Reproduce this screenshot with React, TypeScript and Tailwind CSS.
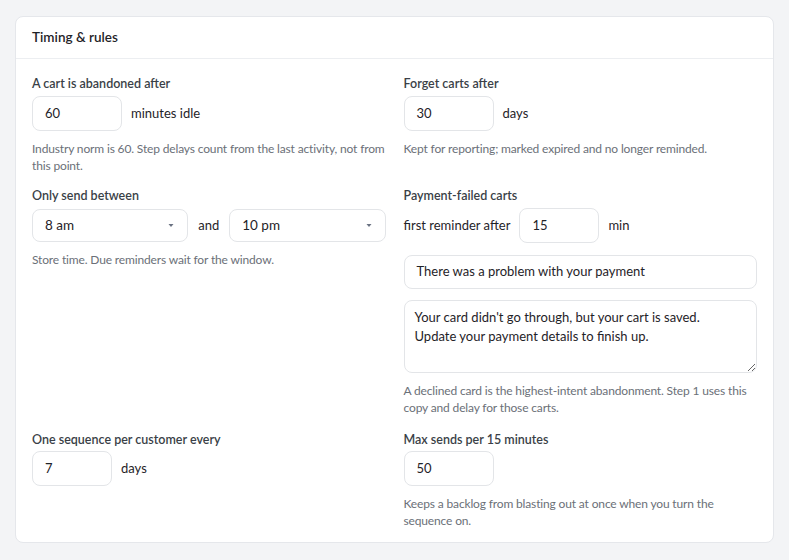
import React from "react";

const font = { fontFamily: 'Lato, "Open Sans", sans-serif' };

function Caret() {
  return (
    <svg width="8" height="5" viewBox="0 0 8 5" className="text-gray-500">
      <path d="M1.5 1h5L4 4z" fill="currentColor" />
    </svg>
  );
}

function Label({ children }: { children: React.ReactNode }) {
  return <div className="text-[12.5px] font-semibold text-[#3a3f47] leading-[18px]">{children}</div>;
}

function Help({ children }: { children: React.ReactNode }) {
  return <p className="mt-[9px] text-[12px] tracking-[-0.15px] leading-[17px] text-[#6b7078]">{children}</p>;
}

function NumInput({ value, w = "w-[90px]" }: { value: string; w?: string }) {
  return (
    <div
      className={`${w} h-[35px] rounded-lg border border-[#e3e5e8] bg-white px-3 flex items-center text-[13px] text-[#1f2328]`}
    >
      {value}
    </div>
  );
}

function Select({ value }: { value: string }) {
  return (
    <div className="flex-1 h-[33px] rounded-lg border border-[#e3e5e8] bg-white pl-3 pr-3 flex items-center justify-between text-[13.5px] text-[#1f2328]">
      <span>{value}</span>
      <Caret />
    </div>
  );
}

export default function App() {
  return (
    <div className="min-h-screen bg-[#f3f4f6] px-[15px] pt-[16px]" style={font}>
      <div className="rounded-lg border border-[#e5e7eb] bg-white">
        <div className="h-[42px] px-4 flex items-center border-b border-[#eceef1] text-[13.5px] font-semibold text-[#1f2328]">
          Timing &amp; rules
        </div>

        <div className="grid grid-cols-2 gap-x-[18px] px-4 pt-4 pb-[13px]">
          {/* row 1 */}
          <div className="mb-[13px]">
            <Label>A cart is abandoned after</Label>
            <div className="mt-[3px] flex items-center gap-[9px] text-[13px] text-[#1f2328]">
              <NumInput value="60" />
              <span>minutes idle</span>
            </div>
            <Help>Industry norm is 60. Step delays count from the last activity, not from this point.</Help>
          </div>
          <div className="mb-[13px]">
            <Label>Forget carts after</Label>
            <div className="mt-[3px] flex items-center gap-[9px] text-[13px] text-[#1f2328]">
              <NumInput value="30" />
              <span>days</span>
            </div>
            <Help>Kept for reporting; marked expired and no longer reminded.</Help>
          </div>

          {/* row 2 */}
          <div className="mb-[15px]">
            <Label>Only send between</Label>
            <div className="mt-[4px] flex items-center gap-[10px] text-[13px] text-[#1f2328]">
              <Select value="8 am" />
              <span>and</span>
              <Select value="10 pm" />
            </div>
            <Help>Store time. Due reminders wait for the window.</Help>
          </div>
          <div className="mb-[15px]">
            <Label>Payment-failed carts</Label>
            <div className="mt-[3px] flex items-center gap-[9px] text-[13px] text-[#1f2328]">
              <span>first reminder after</span>
              <NumInput value="15" w="w-[80px]" />
              <span>min</span>
            </div>
            <div className="mt-[12px] h-[34px] rounded-lg border border-[#e3e5e8] px-3 flex items-center text-[13px] text-[#1f2328]">
              There was a problem with your payment
            </div>
            <textarea
              readOnly
              className="mt-[11px] block w-full h-[73px] rounded-lg border border-[#e3e5e8] px-[10px] py-[7px] text-[13px] leading-[19px] text-[#1f2328] outline-none"
              defaultValue={"Your card didn't go through, but your cart is saved.\nUpdate your payment details to finish up."}
            />
            <Help>A declined card is the highest-intent abandonment. Step 1 uses this copy and delay for those carts.</Help>
          </div>

          {/* row 3 */}
          <div>
            <Label>One sequence per customer every</Label>
            <div className="mt-[2px] flex items-center gap-[9px] text-[13px] text-[#1f2328]">
              <NumInput value="7" w="w-[80px]" />
              <span>days</span>
            </div>
          </div>
          <div>
            <Label>Max sends per 15 minutes</Label>
            <div className="mt-[2px] flex items-center gap-[9px] text-[13px] text-[#1f2328]">
              <NumInput value="50" />
            </div>
            <Help>Keeps a backlog from blasting out at once when you turn the sequence on.</Help>
          </div>
        </div>
      </div>
    </div>
  );
}
